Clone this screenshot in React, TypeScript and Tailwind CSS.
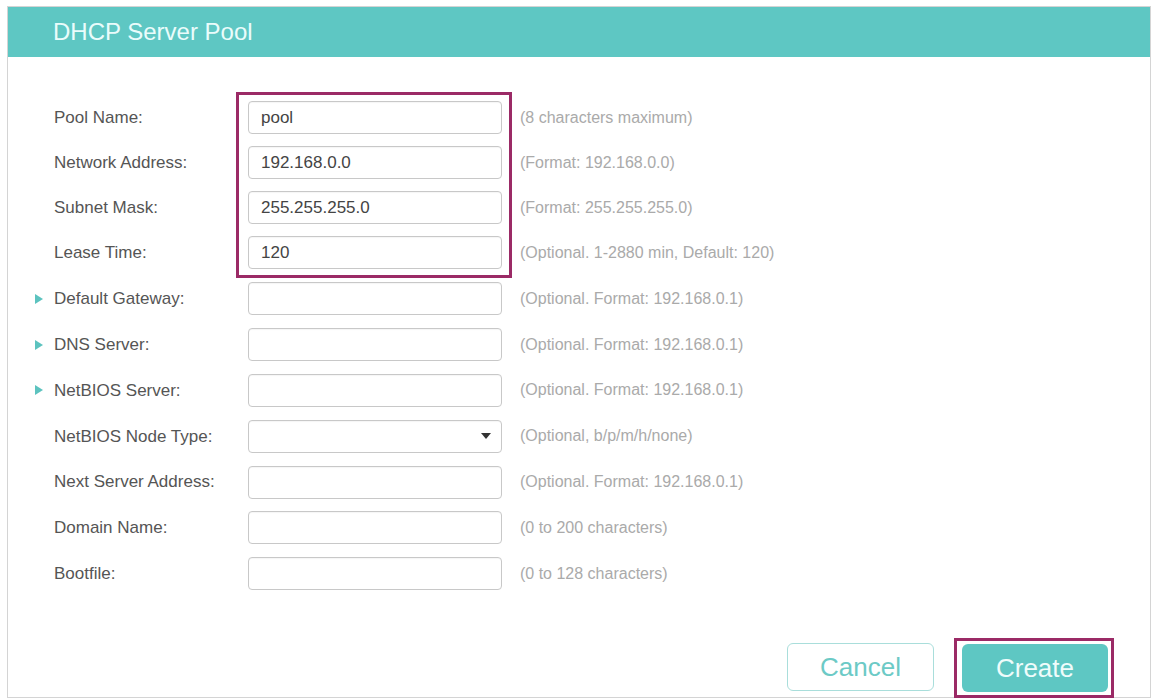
import React from "react";

const font = { fontFamily: '"Liberation Sans", Arial, sans-serif' };

type Row = { label: string; value?: string; hint: string; arrow?: boolean; select?: boolean };

const boxed: Row[] = [
  { label: "Pool Name:", value: "pool", hint: "(8 characters maximum)" },
  { label: "Network Address:", value: "192.168.0.0", hint: "(Format: 192.168.0.0)" },
  { label: "Subnet Mask:", value: "255.255.255.0", hint: "(Format: 255.255.255.0)" },
  { label: "Lease Time:", value: "120", hint: "(Optional. 1-2880 min, Default: 120)" },
];

const rest: Row[] = [
  { label: "Default Gateway:", hint: "(Optional. Format: 192.168.0.1)", arrow: true },
  { label: "DNS Server:", hint: "(Optional. Format: 192.168.0.1)", arrow: true },
  { label: "NetBIOS Server:", hint: "(Optional. Format: 192.168.0.1)", arrow: true },
  { label: "NetBIOS Node Type:", hint: "(Optional, b/p/m/h/none)", select: true },
  { label: "Next Server Address:", hint: "(Optional. Format: 192.168.0.1)" },
  { label: "Domain Name:", hint: "(0 to 200 characters)" },
  { label: "Bootfile:", hint: "(0 to 128 characters)" },
];

function Label({ row }: { row: Row }) {
  return (
    <div className="flex items-center pl-[27px] text-[17px] text-[#555]">
      <span className="flex w-[19px] items-center">
        {row.arrow ? (
          <svg width="8" height="10" viewBox="0 0 8 10">
            <path d="M0 0 L8 5 L0 10 Z" fill="#5cc3bf" />
          </svg>
        ) : null}
      </span>
      {row.label}
    </div>
  );
}

function Field({ row }: { row: Row }) {
  return (
    <div className="flex h-[33px] w-[254px] items-center justify-between rounded-[4px] border border-[#c8c8c8] bg-white px-[12px] text-[17px] text-[#444] shadow-[inset_0_1px_1px_rgba(0,0,0,0.04)]">
      <span>{row.value ?? ""}</span>
      {row.select ? (
        <svg width="10" height="6" viewBox="0 0 10 6" className="mr-[-2px]">
          <path d="M0 0 L10 0 L5 6 Z" fill="#333" />
        </svg>
      ) : null}
    </div>
  );
}

function Hint({ text }: { text: string }) {
  return <div className="flex items-center text-[16px] text-[#aaa]">{text}</div>;
}

export default function App() {
  return (
    <div className="min-h-[698px] bg-white pl-[7px] pt-[6px]" style={font}>
      <div className="flex h-[692px] w-[1144px] flex-col border border-[#d4d4d4]">
        <div className="flex h-[50px] shrink-0 items-center bg-[#5ec7c3] pl-[45px] text-[24px] text-[#eafcfb]">
          DHCP Server Pool
        </div>

        <div className="pt-[35px]">
          {/* highlighted group */}
          <div className="flex">
            <div className="flex w-[228px] flex-col py-[3px]">
              {boxed.map((r) => (
                <div key={r.label} className="flex h-[45px] items-center">
                  <Label row={r} />
                </div>
              ))}
            </div>
            <div className="flex flex-col border-[3px] border-[#9b2a66] pl-[9px] pr-[7px]">
              {boxed.map((r) => (
                <div key={r.label} className="flex h-[45px] items-center">
                  <Field row={r} />
                </div>
              ))}
            </div>
            <div className="flex flex-col py-[3px] pl-[8px]">
              {boxed.map((r) => (
                <div key={r.label} className="flex h-[45px] items-center">
                  <Hint text={r.hint} />
                </div>
              ))}
            </div>
          </div>

          <div className="-mt-[2px] flex flex-col">
            {rest.map((r) => (
              <div key={r.label} className="grid h-[45.8px] grid-cols-[240px_254px_1fr] items-center">
                <Label row={r} />
                <Field row={r} />
                <div className="pl-[18px]">
                  <Hint text={r.hint} />
                </div>
              </div>
            ))}
          </div>
        </div>

        <div className="mt-auto flex items-end justify-end gap-[20px] pr-[36px]">
          <button className="mb-[6px] h-[48px] w-[147px] rounded-[6px] border border-[#a9dedb] bg-white text-[26px] text-[#6ccac6]">
            Cancel
          </button>
          <div className="-mb-[1px] border-[3px] border-[#9b2a66] pb-[3px] pl-[5px] pr-[3px] pt-[3px]">
            <button className="h-[48px] w-[146px] rounded-[6px] bg-[#5ec7c3] text-[26px] text-[#effcfb]">
              Create
            </button>
          </div>
        </div>
      </div>
    </div>
  );
}
